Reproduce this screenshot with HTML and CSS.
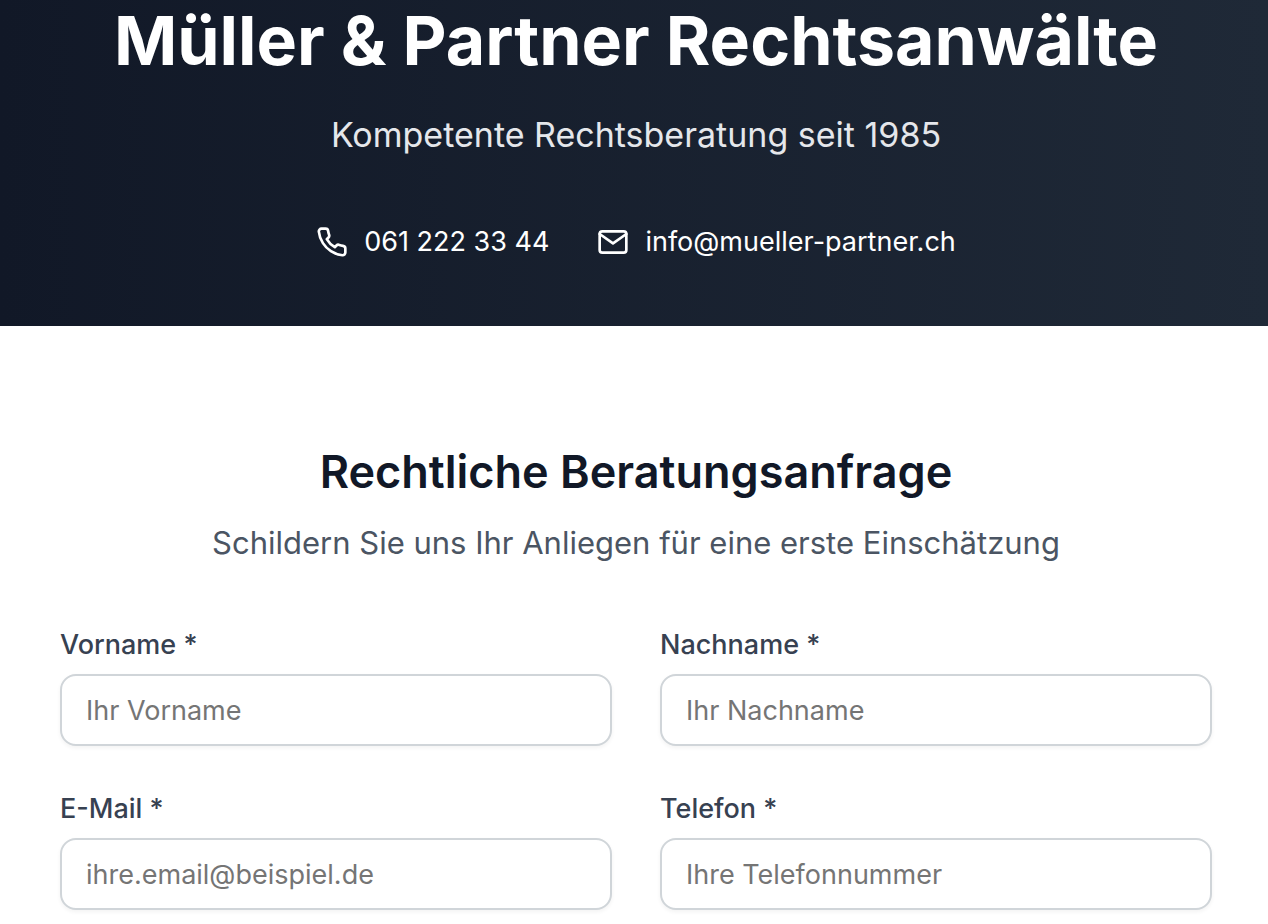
FILE: index.html
```html
<!DOCTYPE html>
<html lang="de">
<head>
    <meta charset="UTF-8">
    <meta name="viewport" content="width=device-width, initial-scale=1.0">
    <title>Müller &amp; Partner Rechtsanwälte</title>
    <link rel="stylesheet" href="styles.css">
</head>
<body>
    <header class="hero">
        <h1>Müller &amp; Partner Rechtsanwälte</h1>
        <p class="tagline">Kompetente Rechtsberatung seit 1985</p>
        <div class="contact">
            <a href="tel:0612223344">
                <svg viewBox="0 0 24 24" aria-hidden="true"><path d="M22 16.92v3a2 2 0 0 1-2.18 2 19.79 19.79 0 0 1-8.63-3.07 19.5 19.5 0 0 1-6-6 19.79 19.79 0 0 1-3.07-8.67A2 2 0 0 1 4.11 2h3a2 2 0 0 1 2 1.72 12.84 12.84 0 0 0 .7 2.81 2 2 0 0 1-.45 2.11L8.09 9.91a16 16 0 0 0 6 6l1.27-1.27a2 2 0 0 1 2.11-.45 12.84 12.84 0 0 0 2.81.7A2 2 0 0 1 22 16.92z"/></svg>
                <span>061 222 33 44</span>
            </a>
            <a href="mailto:info@mueller-partner.ch">
                <svg viewBox="0 0 24 24" aria-hidden="true"><rect x="2" y="4" width="20" height="16" rx="2"/><path d="M22 6l-10 7L2 6"/></svg>
                <span>info@mueller-partner.ch</span>
            </a>
        </div>
    </header>

    <main class="request">
        <h2>Rechtliche Beratungsanfrage</h2>
        <p class="intro">Schildern Sie uns Ihr Anliegen für eine erste Einschätzung</p>

        <form class="form-grid">
            <div class="field">
                <label for="vorname">Vorname *</label>
                <input type="text" id="vorname" placeholder="Ihr Vorname" required>
            </div>
            <div class="field">
                <label for="nachname">Nachname *</label>
                <input type="text" id="nachname" placeholder="Ihr Nachname" required>
            </div>
            <div class="field">
                <label for="email">E-Mail *</label>
                <input type="email" id="email" placeholder="ihre.email@beispiel.de" required>
            </div>
            <div class="field">
                <label for="telefon">Telefon *</label>
                <input type="tel" id="telefon" placeholder="Ihre Telefonnummer" required>
            </div>
        </form>
    </main>
</body>
</html>
```
FILE: styles.css
```css
* {
    box-sizing: border-box;
}
body {
    margin: 0;
    font-family: Inter, "Liberation Sans", sans-serif;
    background: white;
    color: #111827;
}
h1, h2, p {
    margin: 0;
}
.hero {
    padding: 0 56px 64px 60px;
    text-align: center;
    color: white;
    background: linear-gradient(to right, #111827, #1f2937);
}
.hero h1 {
    font-size: 68px;
    line-height: 80px;
    font-weight: 700;
}
.tagline {
    margin-top: 32px;
    font-size: 34px;
    line-height: 46px;
    color: #e5e7eb;
}
.contact {
    display: flex;
    justify-content: center;
    gap: 48px;
    margin-top: 64px;
}
.contact a {
    display: flex;
    align-items: center;
    gap: 16px;
    color: white;
    font-size: 27px;
    line-height: 40px;
    text-decoration: none;
}
.contact svg {
    width: 32px;
    height: 32px;
    fill: none;
    stroke: currentColor;
    stroke-width: 2;
    stroke-linecap: round;
    stroke-linejoin: round;
}
.request {
    padding: 116px 56px 14px 60px;
}
.request h2 {
    font-size: 45px;
    line-height: 60px;
    font-weight: 600;
    text-align: center;
}
.intro {
    margin-top: 20px;
    font-size: 31px;
    line-height: 42px;
    text-align: center;
    color: #4b5563;
}
.form-grid {
    display: grid;
    grid-template-columns: 1fr 1fr;
    gap: 44px 48px;
    margin-top: 62px;
}
.field label {
    display: block;
    margin-bottom: 10px;
    font-size: 27px;
    line-height: 38px;
    font-weight: 500;
    color: #374151;
}
.field input {
    display: block;
    width: 100%;
    height: 72px;
    padding: 0 24px;
    border: 2px solid #d0d5d9;
    border-radius: 16px;
    font: inherit;
    font-size: 27px;
    box-shadow: 0 2px 4px rgba(0, 0, 0, 0.05);
}
.field input::placeholder {
    color: #757575;
}
```
